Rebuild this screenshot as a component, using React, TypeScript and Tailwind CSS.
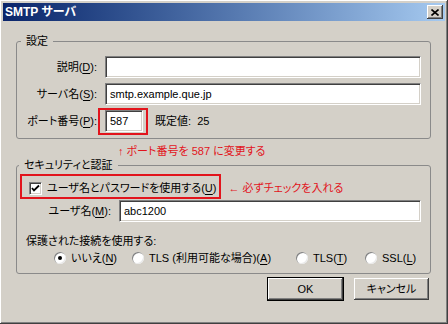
import React from "react";

const RED = "text-[#e2141c]";

function U({ children }: { children: React.ReactNode }) {
  return <span className="underline underline-offset-[2px]">{children}</span>;
}

function TextBox({ value, className = "" }: { value?: string; className?: string }) {
  return (
    <div
      className={`h-[22px] bg-white border border-[#808080] border-r-white border-b-white shadow-[inset_1px_1px_0_#404040,inset_-1px_-1px_0_#d4d0c8] flex items-center px-[4px] ${className}`}
    >
      {value}
    </div>
  );
}

function Radio({ checked = false }: { checked?: boolean }) {
  return (
    <span className="w-[12px] h-[12px] shrink-0 rounded-full bg-white shadow-[inset_1px_1px_0_#808080,inset_-1px_-1px_0_#e8e8e8] flex items-center justify-center">
      {checked && <span className="w-[4px] h-[4px] rounded-full bg-black" />}
    </span>
  );
}

function Checkbox() {
  return (
    <span className="w-[13px] h-[13px] shrink-0 bg-white border border-[#808080] border-r-white border-b-white shadow-[inset_1px_1px_0_#404040,inset_-1px_-1px_0_#d4d0c8] flex items-center justify-center">
      <svg width="9" height="9" viewBox="0 0 9 9">
        <path d="M1 4 L3 6.5 L8 1.5" fill="none" stroke="#000" strokeWidth="1.8" />
      </svg>
    </span>
  );
}

function Button({ label, isDefault = false }: { label: string; isDefault?: boolean }) {
  return (
    <button
      className={`w-[75px] h-[22px] bg-[#d4d0c8] flex items-center justify-center shadow-[inset_-1px_-1px_0_#404040,inset_1px_1px_0_#fff,inset_-2px_-2px_0_#808080] ${
        isDefault ? "outline outline-1 outline-black" : ""
      }`}
    >
      {label}
    </button>
  );
}

export default function App() {
  return (
    <div className="w-[448px] h-[324px] bg-[#d4d0c8] p-[3px] flex flex-col whitespace-nowrap text-[11px] leading-[14px] text-black font-['Liberation_Sans','Noto_Sans_CJK_JP',sans-serif] [font-feature-settings:'palt'] shadow-[inset_-1px_-1px_0_#404040,inset_1px_1px_0_#fff,inset_-2px_-2px_0_#808080]">
      {/* Title bar */}
      <div className="h-[18px] bg-linear-to-r from-[#0a246a] to-[#a6caf0] flex items-center justify-between pl-[2px] pr-[2px]">
        <span className="text-white font-bold text-[12px]">SMTP サーバ</span>
        <span className="w-[16px] h-[14px] bg-[#d4d0c8] flex items-center justify-center shadow-[inset_-1px_-1px_0_#404040,inset_1px_1px_0_#fff,inset_-2px_-2px_0_#808080]">
          <svg width="8" height="7" viewBox="0 0 8 7">
            <path d="M0.5 0.5 L7.5 6.5 M7.5 0.5 L0.5 6.5" stroke="#000" strokeWidth="1.6" />
          </svg>
        </span>
      </div>

      <div className="pl-[13px] pr-[14px] pt-[13px] flex flex-col">
        {/* 設定 */}
        <fieldset className="border border-[#8a8a8a] rounded-[3px] pr-[9px] pb-[6px]">
          <legend className="ml-[4px] px-[5px] leading-[14px]">設定</legend>
          <div className="pt-[8px] flex flex-col gap-[5px]">
            <div className="flex items-center">
              <span className="w-[80px] text-right">
                説明(<U>D</U>):
              </span>
              <TextBox className="ml-[8px] flex-1" />
            </div>
            <div className="flex items-center">
              <span className="w-[80px] text-right">
                サーバ名(<U>S</U>):
              </span>
              <TextBox value="smtp.example.que.jp" className="ml-[8px] flex-1" />
            </div>
            <div className="flex items-center">
              <span className="w-[80px] text-right">
                ポート番号(<U>P</U>):
              </span>
              <div className="relative ml-[8px]">
                <TextBox value="587" className="w-[38px]" />
                <span className="absolute -left-[7px] -right-[5px] -top-[2px] -bottom-[3px] border-2 border-[#e2141c]" />
              </div>
              <span className="ml-[12px]">既定値:&nbsp; 25</span>
            </div>
          </div>
        </fieldset>

        <div className={`mt-[6px] ml-[102px] leading-[13px] ${RED}`}>↑ ポート番号を 587 に変更する</div>

        {/* セキュリティと認証 */}
        <fieldset className="border border-[#8a8a8a] rounded-[3px] pr-[9px] pb-[8px]">
          <legend className="ml-[2px] px-[5px] leading-[14px]">セキュリティと認証</legend>
          <div className="pt-[9px] flex items-center">
            <div className="relative ml-[12px] flex items-center gap-[5px]">
              <Checkbox />
              <span>
                ユーザ名とパスワードを使用する(<U>U</U>)
              </span>
              <span className="absolute -left-[9px] -right-[5px] -top-[7px] -bottom-[4px] border-2 border-[#e2141c]" />
            </div>
            <span className={`ml-[12px] ${RED}`}>← 必ずチェックを入れる</span>
          </div>
          <div className="mt-[5px] flex items-center">
            <span className="w-[94px] text-right">
              ユーザ名(<U>M</U>):
            </span>
            <TextBox value="abc1200" className="ml-[8px] flex-1" />
          </div>
          <div className="mt-[12px] pl-[9px]">保護された接続を使用する:</div>
          <div className="mt-[3px] pl-[37px] flex items-center">
            <label className="w-[78px] flex items-center gap-[5px]">
              <Radio checked />
              <span>
                いいえ(<U>N</U>)
              </span>
            </label>
            <label className="w-[164px] flex items-center gap-[5px]">
              <Radio />
              <span>
                TLS (利用可能な場合)(<U>A</U>)
              </span>
            </label>
            <label className="w-[69px] flex items-center gap-[5px]">
              <Radio />
              <span>
                TLS(<U>T</U>)
              </span>
            </label>
            <label className="flex items-center gap-[5px]">
              <Radio />
              <span>
                SSL(<U>L</U>)
              </span>
            </label>
          </div>
        </fieldset>

        {/* Buttons */}
        <div className="mt-[4px] pr-[2px] flex justify-end gap-[11px]">
          <Button label="OK" isDefault />
          <Button label="キャンセル" />
        </div>
      </div>
    </div>
  );
}
